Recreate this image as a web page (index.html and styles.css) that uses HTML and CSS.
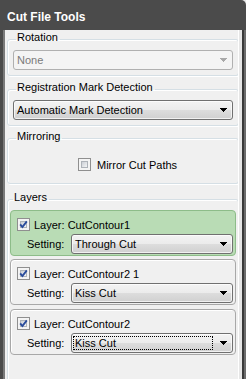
FILE: index.html
```html
<!DOCTYPE html>
<html lang="en">
<head>
  <meta charset="UTF-8">
  <title>Cut File Tools</title>
  <link rel="stylesheet" href="styles.css">
</head>
<body>
  <div class="window">
    <div class="titlebar">Cut File Tools</div>
    <div class="frame">
      <div class="panel">
        <div class="content">
          <fieldset class="group group-rotation">
            <legend>Rotation</legend>
            <div class="combo disabled">
              <span class="value">None</span>
              <span class="drop"><svg width="7" height="4" viewBox="0 0 7 4"><path d="M0 0h7v1h-1v1h-1v1h-1v1h-1v-1h-1v-1h-1v-1h-1z"/></svg></span>
            </div>
          </fieldset>

          <fieldset class="group group-mark">
            <legend>Registration Mark Detection</legend>
            <div class="combo">
              <span class="value">Automatic Mark Detection</span>
              <span class="drop"><svg width="7" height="4" viewBox="0 0 7 4"><path d="M0 0h7v1h-1v1h-1v1h-1v1h-1v-1h-1v-1h-1v-1h-1z"/></svg></span>
            </div>
          </fieldset>

          <fieldset class="group group-mirror">
            <legend>Mirroring</legend>
            <label class="check-row">
              <span class="check"><span class="check-inner"></span></span>
              <span>Mirror Cut Paths</span>
            </label>
          </fieldset>

          <fieldset class="group group-layers">
            <legend>Layers</legend>

            <div class="layer selected">
              <div class="layer-head">
                <span class="check"><span class="check-inner"><svg width="9" height="9" viewBox="0 0 9 9"><path d="M1.2 4.4 L3.4 7 L7.8 1.4" /></svg></span></span>
                <span>Layer: CutContour1</span>
              </div>
              <div class="layer-setting">
                <span class="setting-label">Setting:</span>
                <div class="combo">
                  <span class="value">Through Cut</span>
                  <span class="drop"><svg width="7" height="4" viewBox="0 0 7 4"><path d="M0 0h7v1h-1v1h-1v1h-1v1h-1v-1h-1v-1h-1v-1h-1z"/></svg></span>
                </div>
              </div>
            </div>

            <div class="layer">
              <div class="layer-head">
                <span class="check"><span class="check-inner"><svg width="9" height="9" viewBox="0 0 9 9"><path d="M1.2 4.4 L3.4 7 L7.8 1.4" /></svg></span></span>
                <span>Layer: CutContour2 1</span>
              </div>
              <div class="layer-setting">
                <span class="setting-label">Setting:</span>
                <div class="combo">
                  <span class="value">Kiss Cut</span>
                  <span class="drop"><svg width="7" height="4" viewBox="0 0 7 4"><path d="M0 0h7v1h-1v1h-1v1h-1v1h-1v-1h-1v-1h-1v-1h-1z"/></svg></span>
                </div>
              </div>
            </div>

            <div class="layer">
              <div class="layer-head">
                <span class="check"><span class="check-inner"><svg width="9" height="9" viewBox="0 0 9 9"><path d="M1.2 4.4 L3.4 7 L7.8 1.4" /></svg></span></span>
                <span>Layer: CutContour2</span>
              </div>
              <div class="layer-setting">
                <span class="setting-label">Setting:</span>
                <div class="combo focused">
                  <span class="value">Kiss Cut</span>
                  <span class="drop"><svg width="7" height="4" viewBox="0 0 7 4"><path d="M0 0h7v1h-1v1h-1v1h-1v1h-1v-1h-1v-1h-1v-1h-1z"/></svg></span>
                </div>
              </div>
            </div>
          </fieldset>
        </div>
      </div>
      <div class="edge"></div>
    </div>
  </div>
</body>
</html>
```

FILE: styles.css
```css
* {
  box-sizing: border-box;
}

html {
  background: #e9e9e9;
}

body {
  margin: 0;
  width: 246px;
  height: 379px;
  overflow: hidden;
  font-family: "Liberation Sans", Arial, sans-serif;
  font-size: 11px;
  color: #000;
}

.window {
  display: flex;
  flex-direction: column;
  height: 379px;
  background: #4b4b4b;
  border-top-right-radius: 5px;
}

.titlebar {
  height: 30px;
  padding: 11px 0 0 7px;
  line-height: 12px;
  font-size: 12px;
  font-weight: bold;
  color: #fff;
}

.frame {
  flex: 1;
  display: flex;
  min-height: 0;
  padding-left: 3px;
  border-left: 0;
}

.panel {
  display: flex;
  width: 239px;
  border-left: 2px solid #7a7a7a;
  background: #e6e6e6;
}

.content {
  width: 234px;
  height: 100%;
  overflow: hidden;
  background: #f0f0f0;
  border-right: 1px solid #fff;
}

.edge {
  width: 4px;
  border-left: 2px solid #3a3a3a;
  background: #6c6c6c;
}

/* group boxes */
.group {
  margin: 5px 0 0 2px;
  width: 232px;
  min-width: 0;
  padding: 3px 5px 5px 5px;
  border: 1px solid #d5dfe5;
  border-radius: 3px;
  box-shadow: inset 1px 1px 0 #fff, 1px 1px 0 #fff;
}

.group legend {
  margin-left: 3px;
  padding: 0 2px 3px 1px;
  line-height: 13px;
}

.group-rotation {
  margin-top: 1px;
}

.group-mark {
  margin-top: 5px;
}

.group-mirror {
  margin-top: 4px;
  padding-top: 12px;
  padding-bottom: 12px;
}

.group-layers {
  margin-top: 7px;
  padding: 3px 2px 60px 2px;
}

/* combo boxes */
.combo {
  display: flex;
  height: 20px;
  padding: 0 1px;
  border: 1px solid #707070;
  border-radius: 3px;
  background: linear-gradient(#f3f3f3 0%, #ebebeb 50%, #dddddd 50%, #d0d0d0 100%);
  box-shadow: inset 0 0 0 1px rgba(255, 255, 255, 0.7);
}

.combo .value {
  flex: 1;
  display: flex;
  align-items: center;
  margin: 2px 0;
  padding-left: 2px;
  white-space: nowrap;
}

.combo .drop {
  width: 18px;
  display: flex;
  align-items: center;
  justify-content: flex-end;
  padding-right: 4px;
}

.combo .drop svg {
  display: block;
  fill: #000;
  shape-rendering: crispEdges;
}

.combo.disabled {
  border-color: #b0b0b0;
  background: #f4f4f4;
  box-shadow: none;
  color: #7a7a7a;
}

.combo.disabled .drop svg {
  fill: #a8a8a8;
}

.combo.focused .value {
  outline: 1px dotted #000;
  outline-offset: -1px;
}

/* checkboxes */
.check {
  width: 13px;
  height: 13px;
  flex: none;
  padding: 2px;
  border: 1px solid #8f8f8f;
  background: #f4f4f4;
}

.check-inner {
  display: block;
  width: 100%;
  height: 100%;
  border: 1px solid #aeb3b9;
  background: linear-gradient(135deg, #cbcfd5, #f4f5f6);
  position: relative;
}

.check-inner svg {
  position: absolute;
  left: -2px;
  top: -2px;
  overflow: visible;
}

.check-inner svg path {
  fill: none;
  stroke: #2a4c9c;
  stroke-width: 1.9;
}

.check-row {
  display: flex;
  align-items: center;
  gap: 6px;
  margin-left: 65px;
}

/* layer cards */
.layer {
  margin-bottom: 4px;
  padding: 7px 2px 1px 6px;
  border: 1px solid #a8a8a8;
  border-radius: 4px;
  box-shadow: inset 1px 1px 0 #fff;
}

.layer.selected {
  margin-bottom: 3px;
  border-color: #8dbc89;
  background: #b9dcb5;
  box-shadow: none;
}

.layer-head {
  display: flex;
  align-items: center;
  gap: 4px;
  height: 13px;
}

.layer-setting {
  display: flex;
  align-items: center;
  margin-top: 3px;
  padding-left: 10px;
}

.setting-label {
  width: 44px;
  flex: none;
}

.layer-setting .combo {
  flex: 1;
}
```
